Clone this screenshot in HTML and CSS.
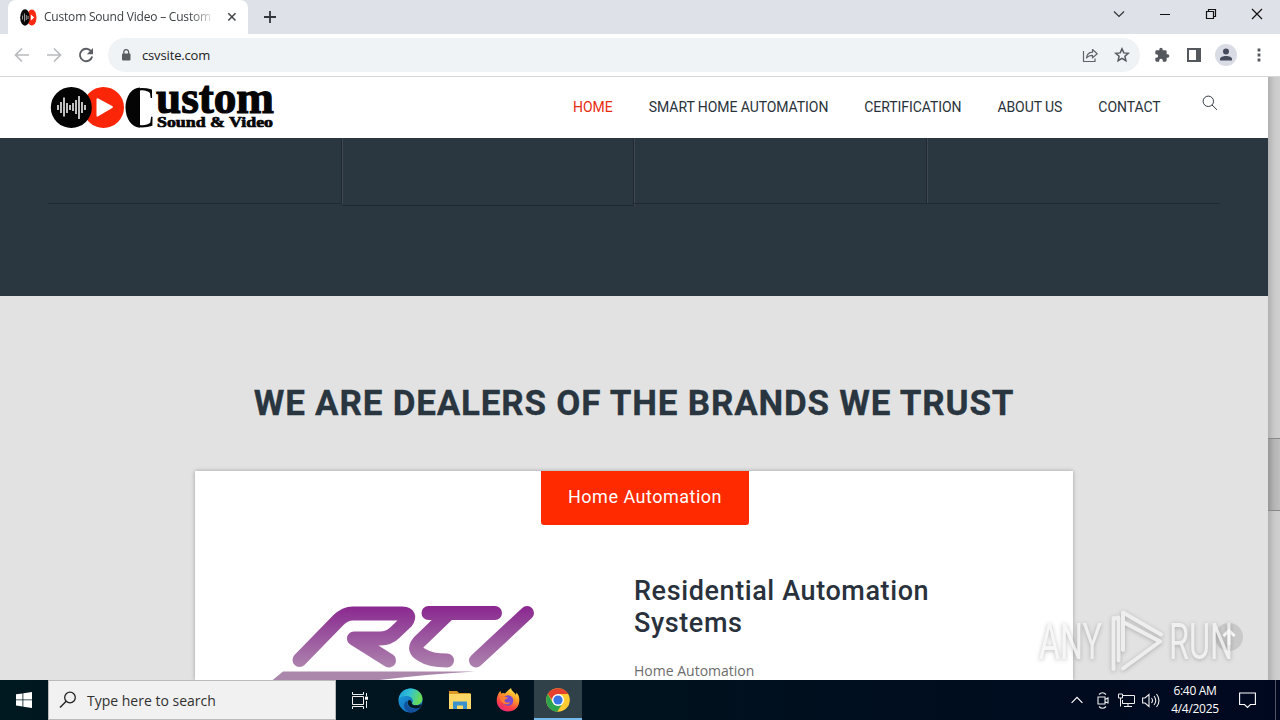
FILE: index.html
```html
<!DOCTYPE html>
<html lang="en">
<head>
<meta charset="utf-8">
<title>Custom Sound Video</title>
<link rel="stylesheet" href="styles.css">
</head>
<body>
<div class="tabstrip">
  <div class="tab">
    <svg class="favicon" width="17" height="17" viewBox="0 0 17 17"><ellipse cx="11.8" cy="8.5" rx="4.7" ry="8" fill="#fc2a12"/><ellipse cx="5" cy="8.5" rx="4.8" ry="8.2" fill="#090909"/><path d="M2.5 6.5v4M4.5 4.5v8M6.3 6v5M8 7v3" stroke="#aaa" stroke-width=".9"/><path d="M10.8 5.5l3.5 3-3.5 3z" fill="#fff"/></svg>
    <span class="tab-title">Custom Sound Video – Custom</span>
    <svg class="tab-close" width="10" height="10" viewBox="0 0 10 10"><path d="M1.3 1.3l7.2 7.2M8.5 1.3L1.3 8.5" stroke="#45494d" stroke-width="1.6"/></svg>
  </div>
  <svg class="newtab" width="14" height="14" viewBox="0 0 14 14"><path d="M7 1v12M1 7h12" stroke="#33363a" stroke-width="1.8"/></svg>
  <div class="window-controls">
    <svg width="12" height="12" viewBox="0 0 12 12"><path d="M1 3.5l5 5 5-5" fill="none" stroke="#333" stroke-width="1.2"/></svg>
    <svg width="12" height="12" viewBox="0 0 12 12"><path d="M1 6.5h10" stroke="#111"/></svg>
    <svg width="12" height="12" viewBox="0 0 12 12"><path d="M1.5 3.5h7v7h-7zM3.5 3.500v-2h7v7h-2" fill="none" stroke="#111" stroke-width="1.2"/></svg>
    <svg width="12" height="12" viewBox="0 0 12 12"><path d="M1 1l10 10M11 1L1 11" stroke="#111" stroke-width="1.2"/></svg>
  </div>
</div>
<div class="toolbar">
  <svg class="nav-icon" width="16" height="16" viewBox="0 0 16 16"><path d="M15 8H2M8 1.500L1.500 8 8 14.500" fill="none" stroke="#b8babd" stroke-width="1.7"/></svg>
  <svg class="nav-icon" width="16" height="16" viewBox="0 0 16 16"><path d="M1 8h13M8 1.500L14.500 8 8 14.500" fill="none" stroke="#b8babd" stroke-width="1.7"/></svg>
  <svg class="nav-icon" width="16" height="16" viewBox="0 0 16 16"><path d="M13.300 4.500A6.200 6.200 0 1 0 14.200 9.500" fill="none" stroke="#5a5e62" stroke-width="1.900"/><path d="M15 1v6.200H8.800z" fill="#5a5e62"/></svg>
  <div class="omnibox">
    <svg width="10" height="12" viewBox="0 0 10 12"><rect x="1" y="4.500" width="8.500" height="7" rx="1" fill="#5a5e63"/><path d="M2.800 5V3a2.400 2.400 0 0 1 4.800 0v2" fill="none" stroke="#5a5e63" stroke-width="1.300"/></svg>
    <span class="url">csvsite.com</span>
    <svg class="share" width="16" height="16" viewBox="0 0 16 16"><path d="M1.500 4v10.500h11.500v-3" fill="none" stroke="#606468" stroke-width="1.200"/><path d="M4.500 11c.4-4 2.500-5.700 6-5.800V2.500l4.700 4.200-4.700 4.200V8.300c-2.700 0-4.500.8-6 2.700z" fill="none" stroke="#606468" stroke-width="1.200" stroke-linejoin="round"/></svg>
    <svg width="16" height="16" viewBox="0 0 16 16"><path d="M8 1.800l1.800 4.100 4.500.4-3.400 3 1 4.400L8 11.300l-3.900 2.400 1-4.400-3.400-3 4.500-.4z" fill="none" stroke="#55595d" stroke-width="1.500"/></svg>
  </div>
  <svg class="ext" width="16" height="16" viewBox="0 0 24 24"><path d="M20.500 11H19V7a2 2 0 0 0-2-2h-4V3.500a2.500 2.500 0 0 0-5 0V5H4a2 2 0 0 0-2 2v3.800h1.500a2.700 2.700 0 0 1 0 5.400H2V20c0 1.100.9 2 2 2h3.800v-1.500a2.700 2.700 0 0 1 5.400 0V22H17a2 2 0 0 0 2-2v-4h1.500a2.500 2.500 0 0 0 0-5z" fill="#54585c"/></svg>
  <svg class="panel" width="14" height="14" viewBox="0 0 14 14"><path d="M1 1h12v12H1z" fill="none" stroke="#54585c" stroke-width="2"/><path d="M9 1h4v12H9z" fill="#54585c"/></svg>
  <svg class="avatar" width="22" height="22" viewBox="0 0 22 22"><circle cx="11" cy="11" r="11" fill="#dadce5"/><circle cx="11" cy="7.500" r="3" fill="#464b5c"/><path d="M5 16.500v-1.500c0-4 12-4 12 0v1.500z" fill="#464b5c"/></svg>
  <svg width="4" height="14" viewBox="0 0 4 14"><path d="M.6 .6h2.800v2.800H.6zM.6 5.600h2.800v2.800H.6zM.6 10.600h2.800v2.800H.6z" fill="#55585c"/></svg>
</div>
<div class="viewport">
  <main class="page">
    <header class="site-header">
      <svg class="logo" width="226" height="46" viewBox="0 0 226 46">
        <circle cx="53.500" cy="22.400" r="20.500" fill="#fb2608"/>
        <circle cx="21.300" cy="22.400" r="20.500" fill="#030303"/>
        <path d="M8 20v5M11 17v11M14 12.500v19M17 18v10M20 20v5M23 18v8M26 15v14M29 11v23M32 17v11M35 20v5" stroke="#fff" stroke-width="1.500"/>
        <path d="M46.500 14.500q0-1.800 1.700-1l14 7.600q1.700 1 0 2l-14 8.200q-1.700 1-1.700-.8z" fill="#fff"/>
        <path d="M90 2.500A14.500 20 0 0 0 90 42.500z" fill="#050505"/>
        <text class="logo-initial" transform="translate(75 42) scale(.75 1)" font-size="60">C</text>
        <text class="logo-name" x="106" y="28" font-size="46" textLength="118" lengthAdjust="spacingAndGlyphs">ustom</text>
        <text class="logo-sub" x="107" y="42" font-size="15" textLength="116" lengthAdjust="spacingAndGlyphs">Sound &amp; Video</text>
      </svg>
      <nav class="menu">
        <a class="active">HOME</a><a>SMART HOME AUTOMATION</a><a>CERTIFICATION</a><a>ABOUT US</a><a>CONTACT</a>
      </nav>
      <svg class="search" width="16" height="16" viewBox="0 0 16 16"><circle cx="6.300" cy="6.300" r="5.200" fill="none" stroke="#333b42"/><path d="M10 10l5 4.800" stroke="#333b42"/></svg>
    </header>
    <section class="features">
      <div class="feature"></div><div class="feature tall"></div><div class="feature"></div><div class="feature"></div>
    </section>
    <section class="brands">
      <h2><span>WE ARE DEALERS OF THE BRANDS WE TRUST</span></h2>
      <div class="card">
        <div class="card-tab">Home Automation</div>
        <div class="card-body">
          <svg class="rti" width="272" height="80" viewBox="270 600 272 80">
            <defs><linearGradient id="purple" gradientUnits="userSpaceOnUse" x1="0" y1="606" x2="0" y2="670"><stop offset="0" stop-color="#8b2790"/><stop offset=".3" stop-color="#944599"/><stop offset="1" stop-color="#ae86ae"/></linearGradient></defs>
            <g fill="none" stroke="url(#purple)" stroke-width="14" stroke-linecap="round" stroke-linejoin="round">
              <path d="M299.500 660L338 620.500Q345 613.500 353 613.500H402Q412 614 406 622L395 632.500Q389 638.500 380 638.500H354L389 660.500"/>
              <path d="M428.500 613H495M447 615L419 642Q412 650 422 655Q430 660.500 447 660.500"/>
              <path d="M476 660.500L527 613"/>
            </g>
            <path d="M272 680.500L283 671.500H475Q430 674 375 680.500z" fill="#ab87ab"/>
          </svg>
          <div class="card-text">
            <h3>Residential Automation<br>Systems</h3>
            <p>Home Automation</p>
          </div>
        </div>
      </div>
    </section>
  </main>
  <div class="scrollbar"><div class="thumb"></div></div>
</div>
<footer class="taskbar">
  <div class="start"><svg width="16" height="16" viewBox="0 0 16 16"><path d="M0 2.300l6.500-.9v6.100H0zM7.300 1.300L16 0v7.500H7.300zM0 8.300h6.500v6.200L0 13.600zM7.300 8.300H16V16l-8.700-1.300z" fill="#fff"/></svg></div>
  <div class="searchbox">
    <svg width="18" height="18" viewBox="0 0 18 18"><circle cx="11" cy="6.500" r="5.300" fill="none" stroke="#222" stroke-width="1.300"/><path d="M7.200 10.300L1 16.500" stroke="#222" stroke-width="1.400"/></svg>
    <span>Type here to search</span>
  </div>
  <div class="app"><svg width="17" height="17" viewBox="0 0 17 17"><path d="M.5 4.500h11v8H.5zM.5 0v2.500h11V0M.5 17v-2.500h11V17M14.500 1v3.500M14.500 9v7" fill="none" stroke="#eee"/><path d="M13 4.700h3v3h-3z" fill="#fff"/></svg></div>
  <div class="app wide"><svg width="25" height="25" viewBox="0 0 25 25">
    <defs><linearGradient id="edgeTop" x1="0" y1="0" x2="1" y2=".3"><stop offset="0" stop-color="#169bd7"/><stop offset=".5" stop-color="#34c1d4"/><stop offset="1" stop-color="#67db58"/></linearGradient><linearGradient id="edgeLow" x1="0" y1="0" x2="1" y2="1"><stop offset="0" stop-color="#1da0df"/><stop offset="1" stop-color="#0b5cad"/></linearGradient></defs>
    <circle cx="12.500" cy="12.500" r="12" fill="url(#edgeLow)"/>
    <path d="M.6 12C1.500 4 7 .5 12.500 .5 20 .5 24.600 6 24.500 11c0 4-3.500 6-7 6-3.500 0-4-1-3-2.500C16 11 13 8.500 9 8 5 7.700 2 9 .6 12z" fill="url(#edgeTop)"/>
    <path d="M9.500 12.500c-2 5 3 9.500 12.500 7.500-4 5-11 6.500-14.500 1.500-3-4-.5-8 2-9z" fill="#124f9c"/><path d="M14 15c-.2 2 3 3.500 9.700 1.200l-2 3.600C15 22 8 18 10 13c1-2 3.500-1 4 2z" fill="#061823"/>
  </svg></div>
  <div class="app folder"><svg width="22" height="20" viewBox="0 0 22 20"><path d="M0 1h8l2 2h11.500v5H0z" fill="#dc9a24"/><path d="M0 4h22v15H0z" fill="#fed867"/><path d="M4 19v-7.500h14V19h-4v-3.500H8V19z" fill="#3b91cb"/></svg></div>
  <div class="app fox"><svg width="24" height="24" viewBox="0 0 24 24">
    <defs><linearGradient id="fox" x1=".8" y1="0" x2=".3" y2="1"><stop offset="0" stop-color="#fff14b"/><stop offset=".4" stop-color="#ff9a28"/><stop offset=".75" stop-color="#ff3d47"/><stop offset="1" stop-color="#e42a80"/></linearGradient></defs>
    <path d="M15 0c.3 3 3.500 4 5 7l.4-2.500C23 7 23.500 10 23.300 13 23 19.500 18 23.500 12 23.500S.7 19 .7 12.500C.7 9 2 7 3 4.500L4.500 3l.7 2.500C7 4.500 8 5 9 5.500 11 3.500 13 1.500 15 0z" fill="url(#fox)"/><circle cx="12" cy="12.500" r="5.300" fill="#784bd1"/><path d="M4 9c3-1 5 0 8 .5-1 2-3.500 1.500-3.500 3 .5 2.500 4 2.500 6 1.500-2 4-10 3-10.500-5z" fill="#ff7e2f"/>
  </svg></div>
  <div class="app current"><svg width="24" height="24" viewBox="0 0 24 24"><circle cx="12" cy="12" r="11.800" fill="#ffcb33"/><path d="M1.800 6.100A11.800 11.800 0 0 1 22.200 6.100H12L8 14.500z" fill="#e6402f"/><path d="M1.800 6.100A11.800 11.800 0 0 0 11.200 23.800L16.800 15H7z" fill="#2ca34c"/><circle cx="12" cy="12" r="6" fill="#fff"/><circle cx="12" cy="12" r="4.600" fill="#3776e2"/></svg></div>
  <div class="tray">
    <svg width="12" height="8" viewBox="0 0 12 8"><path d="M.6 6.800L6 1.400l5.400 5.400" fill="none" stroke="#fff" stroke-width="1.200"/></svg>
    <svg width="12" height="17" viewBox="0 0 12 17"><path d="M2 2.500Q5.500-1 9 2.500M2 14.500q3.500 3.500 7 0M1 5h7v7H1zM8 7.500L11 6v5L8 9.700" fill="none" stroke="#eee" stroke-width="1.100"/></svg>
    <svg width="17" height="15" viewBox="0 0 17 15"><path d="M4.500 2.500h12v8h-12V7M10 10.500v3M6 13.500h8M.5 1h4v4h-4zM2.500 5v8.500" fill="none" stroke="#eee"/></svg>
    <svg width="18" height="15" viewBox="0 0 18 15"><path d="M.6 5H3l4-3.500v12L3 10H.6zM9.500 5q2 2.500 0 5M12 3q3.500 4.500 0 9M14.500 1q5 6.500 0 13" fill="none" stroke="#eee" stroke-width="1.100"/></svg>
    <div class="clock"><span>6:40 AM</span><span>4/4/2025</span></div>
    <svg class="note" width="17" height="17" viewBox="0 0 17 17"><path d="M.6 1h15.800v11.500h-5L8.500 15.500l-3-3H.6z" fill="none" stroke="#fff" stroke-width="1.100"/></svg>
    <i class="peek"></i>
  </div>
</footer>
<svg class="watermark" width="220" height="80" viewBox="1030 600 220 80">
  <circle cx="1229" cy="637" r="14" fill="#aaa" opacity=".45"/>
  <path d="M1229 645v-14M1223.500 636l5.500-5.500 5.500 5.500" fill="none" stroke="#fff" stroke-width="3"/>
  <g class="mark">
    <text x="1039" y="659" textLength="63" lengthAdjust="spacingAndGlyphs">ANY</text>
    <text x="1169" y="659" textLength="64" lengthAdjust="spacingAndGlyphs">RUN</text>
    <path d="M1113.500 618v51M1113.500 619l5-1.500v43M1123 650v-37.500l38 22M1123 622l37 19.500-37 27" fill="none" stroke="#f3f3f3" stroke-width="4" stroke-linecap="round" stroke-linejoin="round"/>
  </g>
</svg>
</body>
</html>
```
FILE: styles.css
```css
* { box-sizing: border-box; }
body { margin: 0; width: 1280px; height: 720px; overflow: hidden; display: flex; flex-direction: column; font-family: Roboto, sans-serif; background: #fff; position: relative; }
svg { display: block; flex: none; }
h2, h3, p { margin: 0; }
.tabstrip { height: 34px; background: #dee1e8; display: flex; align-items: center; flex: none; }
.tab { align-self: stretch; width: 240px; margin-left: 8px; background: #fff; border-radius: 8px 8px 0 0; display: flex; align-items: center; padding-left: 12px; }
.tab-title { width: 168px; margin-left: 7px; white-space: nowrap; font: 12px/20px "Open Sans", sans-serif; color: #3c4043; letter-spacing: -.2px; -webkit-mask-image: linear-gradient(90deg, #000 145px, transparent 172px); mask-image: linear-gradient(90deg, #000 145px, transparent 172px); }
.tab-close { margin-left: 15px; }
.newtab { margin-left: 15px; }
.window-controls { margin-left: auto; margin-right: 17px; margin-top: -6px; display: flex; gap: 34px; }
.toolbar { height: 43px; flex: none; background: #fff; border-bottom: 1px solid #d5d6d8; display: flex; align-items: center; padding-left: 14px; }
.nav-icon { margin-right: 16px; }
.omnibox { width: 1032px; height: 34px; margin-left: -2px; border-radius: 17px; background: #f0f3f5; display: flex; align-items: center; padding: 0 10px 0 13px; }
.url { margin-left: 11px; font: 13px "Open Sans", sans-serif; color: #202124; letter-spacing: -.15px; }
.share { margin-left: auto; margin-right: 16px; }
.ext { margin-left: 14px; }
.panel { margin-left: 17px; }
.avatar { margin-left: 14px; margin-right: 20px; }
.viewport { height: 603px; flex: none; display: flex; }
.page { width: 1268px; overflow: hidden; background: #e2e2e2; }
.site-header { height: 61px; background: #fff; display: flex; padding-left: 50px; }
.logo { margin-top: 8px; }
.logo-name { font-family: "Liberation Serif", serif; font-weight: 700; fill: #050505; stroke: #050505; stroke-width: 1.2px; }
.logo-initial { font-family: "Liberation Serif", serif; fill: #050505; }
.logo-sub { font-family: "Liberation Serif", serif; font-weight: 700; fill: #050505; stroke: #050505; stroke-width: .7px; }
.menu { margin-left: 297px; height: 60px; display: flex; align-items: center; gap: 36px; font-size: 14px; letter-spacing: -.07px; color: #29323a; white-space: nowrap; }
.menu .active { color: #e82c10; letter-spacing: 0; }
.search { margin: 18px 0 0 41px; }
.features { height: 158px; background: #2b3740; padding: 0 48px; display: grid; grid-template-columns: 294px 292px 293px 293px; align-items: start; }
.feature { height: 66px; border-bottom: 1px solid #202932; border-right: 1px solid #202932; box-shadow: 1px 0 #3e4852; }
.feature:last-child { border-right: 0; box-shadow: none; }
.feature.tall { height: 68px; }
.brands { height: 384px; padding: 86px 195px 0; }
h2 { width: 878px; height: 89px; line-height: 43px; text-align: center; font-size: 35px; font-weight: 700; letter-spacing: .8px; color: #29353f; white-space: nowrap; -webkit-text-stroke: .3px #29353f; }
.card { width: 878px; height: 209px; background: #fff; box-shadow: 0 0 4px rgba(0,0,0,.3); }
.card-tab { width: 208px; height: 54px; margin-left: 346px; background: #ff2a00; border-radius: 0 0 3px 3px; color: #fff; font-size: 18px; line-height: 51px; text-align: center; letter-spacing: .5px; }
.card-body { display: flex; }
.rti { margin: 75px 0 0 75px; }
.card-text { margin: 50px 0 0 92px; }
h3 { font-size: 27px; font-weight: 500; line-height: 32px; letter-spacing: .6px; color: #29323c; white-space: nowrap; }
.card-text p { margin-top: 22px; font: 14px/20px "Open Sans", sans-serif; color: #6d6d6d; }
.scrollbar { width: 12px; padding-top: 361px; background: linear-gradient(90deg, #b0b0b0, #c9c9c9 50%, #d0d0d0); }
.thumb { height: 73px; background: linear-gradient(90deg, #969696, #b4b4b4 50%, #bfbfbf); border: solid #888; border-width: 1px 0; }
.taskbar { height: 40px; flex: none; display: flex; background: linear-gradient(90deg, #001820, #00121e 50%, #000820); }
.start { width: 48px; display: grid; place-items: center; }
.searchbox { width: 288px; background: #f1f1f1; border: 1px solid #b9b9b9; display: flex; align-items: center; padding-left: 10px; font: 14px "Open Sans", sans-serif; color: #303030; }
.searchbox span { margin-left: 10px; }
.app { width: 48px; display: grid; place-items: center; }
.app.wide { width: 53px; }
.app.folder { width: 45px; }
.app.fox { width: 52px; }
.current { background: #304149; border-bottom: 2px solid #76b9ed; padding-top: 2px; }
.tray { margin-left: auto; display: flex; align-items: center; gap: 13px; }
.tray svg:nth-child(2) { margin-left: 1px; }
.tray svg:nth-child(3) { margin-left: -4px; }
.tray svg:nth-child(4) { margin-left: -6px; }
.clock { margin-left: -2px; width: 48px; display: flex; flex-direction: column; align-items: center; font: 12px/18px "Open Sans", sans-serif; color: #fff; letter-spacing: -.3px; white-space: nowrap; }
.clock + .note { margin-left: 7px; }
.peek { width: 1px; height: 40px; background: #556; margin: 0 4px 0 6px; }
.watermark { position: absolute; left: 1030px; top: 600px; }
.mark { filter: drop-shadow(0 1px 2px rgba(80,80,80,.5)); opacity: .75; }
.mark text { font: 400 50px Roboto, sans-serif; fill: #f5f5f5; }
```
